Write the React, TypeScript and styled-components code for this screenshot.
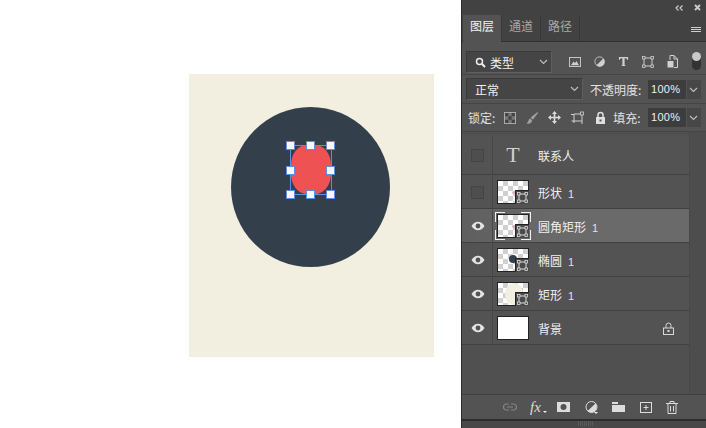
import React from "react";
import styled, { createGlobalStyle } from "styled-components";

const Global = createGlobalStyle`
  html, body { margin: 0; padding: 0; background: #fff; }
  body { font-family: "Noto Sans CJK SC", "Liberation Sans", sans-serif; }
`;
const Page = styled.div`
  width: 706px; height: 428px; display: flex; overflow: hidden; background: #fff;
`;
const Workspace = styled.div`
  flex: 1; padding: 74px 0 0 189px; box-sizing: border-box;
`;
const Doc = styled.div`
  position: relative; width: 245px; height: 283px; background: #f2eee0;
`;
const Circle = styled.div`
  position: absolute; left: 42px; top: 33px; width: 159px; height: 160px; border-radius: 50%; background: #333f4b;
`;
const Shape = styled.div`
  position: absolute; left: 102px; top: 71px; width: 40px; height: 49px; background: #ee5253;
  border-radius: 16px / 20px;
`;
const Outline = styled.div`
  position: absolute; left: 101px; top: 71px; width: 40px; height: 48px; border: 1px solid #5f8ee0;
`;
const Handle = styled.div<{ $x: number; $y: number }>`
  position: absolute; left: ${p => p.$x}px; top: ${p => p.$y}px; width: 7px; height: 7px;
  background: #f6f9ff; border: 1px solid #5f8ee0;
`;
const Panel = styled.div`
  width: 245px; height: 428px; flex: none; background: #535353; display: flex; flex-direction: column;
  box-sizing: border-box; border-left: 1px solid #2c2c2c; color: #e6e6e6;
`;
const TopBar = styled.div`
  height: 15px; background: #424242; display: flex; justify-content: flex-end; align-items: center;
  gap: 11px; padding-right: 5px; flex: none;
`;
const TabBar = styled.div`
  height: 27px; background: #424242; display: flex; align-items: stretch; flex: none; border-bottom: 1px solid #323232;
  box-sizing: border-box;
`;
const Tab = styled.div<{ $active?: boolean }>`
  width: 39px; margin-left: ${p => (p.$active ? 1 : 0)}px; font-size: 12px; line-height: 22px; text-align: center;
  background: ${p => (p.$active ? "#535353" : "#424242")};
  color: ${p => (p.$active ? "#f4f4f4" : "#a8a8a8")};
  border-right: 1px solid #383838; box-sizing: border-box;
  margin-bottom: ${p => (p.$active ? "-1px" : 0)};
`;
const TabMenu = styled.div`
  margin-left: auto; margin-right: 5px; align-self: center; width: 10px; display: flex; flex-direction: column; gap: 1px; padding-top: 2px;
  span { display: block; height: 1px; background: #cfcfcf; }
`;
const ToolRow = styled.div<{ $h: number; $top?: number }>`
  height: ${p => p.$h}px; display: flex; align-items: center; padding: ${p => p.$top ?? 0}px 5px 0 4px; box-sizing: border-box; flex: none;
  border-bottom: 1px solid #454545; position: relative;
`;
const Select = styled.div<{ $w: number }>`
  width: ${p => p.$w}px; height: 22px; box-sizing: border-box; flex: none; gap: 4px;
  background: #454545; border: 1px solid #3a3a3a; border-bottom-color: #5f5f5f; border-right-color: #5f5f5f;
  display: flex; align-items: center; font-size: 12px; color: #f0f0f0; padding: 1px 0 0 8px; position: relative;
`;
const Chevron = styled.svg`
  position: absolute; right: 3px; top: 7px; width: 9px; height: 6px;
`;
const FilterIcons = styled.div`
  display: flex; align-items: center; margin-left: 17px; gap: 13px;
  svg { display: block; flex: none; }
`;
const Toggle = styled.div`
  position: absolute; right: 5px; top: 10px; width: 9px; height: 18px; border-radius: 5px; background: #333;
  &::before { content: ""; display: block; width: 9px; height: 9px; border-radius: 50%; background: #c9c9c9; }
`;
const Label = styled.span<{ $m: number }>`
  font-size: 12px; color: #e2e2e2; white-space: nowrap; margin-left: ${p => p.$m}px;
`;
const Percent = styled.div`
  width: 38px; height: 19px; box-sizing: border-box; background: #3d3d3d; font-size: 11px; font-family: "Liberation Sans", sans-serif; letter-spacing: .3px;
  line-height: 19px; padding-left: 3px; color: #f0f0f0; flex: none; margin-left: auto;
`;
const Arrow = styled.div`
  width: 14px; height: 19px; background: #474747; margin-left: 1px; position: relative; flex: none;
`;
const LockIcons = styled.div`
  display: flex; align-items: center; margin-left: 9px; gap: 10px; width: 109px; flex: none;
  svg { display: block; flex: none; }
`;
const ListArea = styled.div`
  flex: 1; display: flex; min-height: 0;
`;
const List = styled.div`
  width: 227px; flex: none; padding-top: 3px; box-sizing: border-box; background: #505050;
`;
const Scroll = styled.div`
  flex: 1; background: #4d4d4d; border-left: 1px solid #484848;
`;
const Row = styled.div<{ $h?: number; $selected?: boolean }>`
  height: ${p => p.$h ?? 34}px; box-sizing: border-box; display: flex; align-items: center; position: relative; padding-top: 1px;
  background: ${p => (p.$selected ? "linear-gradient(90deg,#5f5f5f,#6a6a6a 40%)" : "#535353")};
  border-bottom: 1px solid #404040;
`;
const EyeCell = styled.div`
  width: 29px; flex: none; display: flex; align-items: center; justify-content: center; align-self: stretch;
  border-right: 1px solid #464646; margin-left: 1px;
`;
const Check = styled.div`
  width: 11px; height: 11px; border: 1px solid #444; background: #4e4e4e;
`;
const Thumb = styled.div<{ $blank?: boolean }>`
  width: 32px; height: 24px; margin-left: 4px; position: relative; flex: none; border: 1px solid #222; box-sizing: border-box;
  background-color: #fff;
  ${p => !p.$blank && `background-image: repeating-conic-gradient(#d0d0d0 0 25%, #fff 0 50%); background-size: 10px 10px;`}
`;
const Badge = styled.svg`
  position: absolute; right: -1px; bottom: -1px; width: 14px; height: 14px; display: block;
`;
const Bracket = styled.div`
  position: absolute; left: -3px; top: -3px; right: -3px; bottom: -3px;
  --c: #f0f0f0;
  background:
    linear-gradient(var(--c),var(--c)) 0 0/10px 1px no-repeat,
    linear-gradient(var(--c),var(--c)) 0 0/1px 10px no-repeat,
    linear-gradient(var(--c),var(--c)) 100% 0/10px 1px no-repeat,
    linear-gradient(var(--c),var(--c)) 100% 0/1px 10px no-repeat,
    linear-gradient(var(--c),var(--c)) 0 100%/10px 1px no-repeat,
    linear-gradient(var(--c),var(--c)) 0 100%/1px 10px no-repeat,
    linear-gradient(var(--c),var(--c)) 100% 100%/10px 1px no-repeat,
    linear-gradient(var(--c),var(--c)) 100% 100%/1px 10px no-repeat;
`;
const Spot = styled.div<{ $x: number; $y: number; $w: number; $h: number; $c: string }>`
  position: absolute; left: ${p => p.$x}px; top: ${p => p.$y}px; width: ${p => p.$w}px; height: ${p => p.$h}px;
  border-radius: 50%; background: ${p => p.$c};
`;
const Name = styled.span`
  font-size: 12px; color: #f0f0f0; margin-left: 9px; white-space: nowrap;
`;
const Num = styled.span`
  font-family: "Liberation Sans", sans-serif; font-size: 11px; margin-left: 6px; color: #e2e2e2;
`;
const TypeT = styled.div`
  width: 32px; margin-left: 4px; text-align: center; font-family: "Liberation Serif", serif; font-size: 22px; line-height: 1; color: #cfcfcf; flex: none;
`;
const LockTail = styled.svg`
  position: absolute; right: 15px; top: 11px; display: block;
`;
const Footer = styled.div`
  height: 25px; flex: none; background: #535353; border-top: 1px solid #3f3f3f; display: flex; align-items: center;
  justify-content: flex-end; padding-right: 28px; box-sizing: border-box;
`;
const FootIcon = styled.svg<{ $m: number }>`
  display: block; flex: none; margin-left: ${p => p.$m}px;
`;
const Fx = styled.span`
  font-family: "Liberation Serif", serif; font-style: italic; font-size: 15px; color: #dcdcdc; margin-left: 13px; line-height: 1; position: relative; width: 14px;
  &::after { content: ""; position: absolute; right: -3px; bottom: 0; border: 2px solid transparent; border-top-color: #eee; }
`;
const Grip = styled.div`
  height: 9px; flex: none; background: #484848; border-top: 2px solid #2d2d2d; box-sizing: border-box; display: flex; justify-content: center;
  &::after { content: ""; width: 16px; height: 5px; background: repeating-linear-gradient(90deg,#5a5a5a 0 1px,transparent 1px 2px); margin-right: -3px; }
`;

const ChevronIcon = () => (
  <Chevron viewBox="0 0 9 6"><path d="M1 1l3.500 3.500L8 1" fill="none" stroke="#bdbdbd" strokeWidth="1.200" /></Chevron>
);
const Eye = () => (
  <svg width="14" height="10" viewBox="0 0 14 10">
    <path d="M.5 5C2.500 2 4.500.7 7 .7S11.500 2 13.500 5C11.500 8 9.500 9.300 7 9.300S2.500 8 .5 5Z" fill="#e4e4e4" />
    <circle cx="7" cy="5" r="2.400" fill="#535353" />
  </svg>
);
const ShapeBadge = () => (
  <Badge viewBox="0 0 14 14">
    <rect width="14" height="14" fill="#4a4a4a" />
    <path d="M.5 14V.5H14" fill="none" stroke="#222" strokeWidth="1" />
    <rect x="4" y="4" width="7" height="7" fill="none" stroke="#ddd" />
    <rect x="2.500" y="2.500" width="2.500" height="2.500" fill="#4a4a4a" stroke="#ddd" strokeWidth=".8" />
    <rect x="10" y="2.500" width="2.500" height="2.500" fill="#4a4a4a" stroke="#ddd" strokeWidth=".8" />
    <rect x="2.500" y="10" width="2.500" height="2.500" fill="#4a4a4a" stroke="#ddd" strokeWidth=".8" />
    <rect x="10" y="10" width="2.500" height="2.500" fill="#4a4a4a" stroke="#ddd" strokeWidth=".8" />
  </Badge>
);
const handles = [[0,0],[20,0],[40,0],[0,25],[40,25],[0,49],[20,49],[40,49]];

export default function App() {
  return (
    <Page>
      <Global />
      <Workspace>
        <Doc>
          <Circle />
          <Shape />
          <Outline>
            {handles.map(([x, y]) => <Handle key={`${x}-${y}`} $x={x - 5} $y={y - 5} />)}
          </Outline>
        </Doc>
      </Workspace>
      <Panel>
        <TopBar>
          <svg width="8" height="6" viewBox="0 0 8 6"><path d="M3.500.5 1 3l2.500 2.500M7.500.5 5 3l2.500 2.500" fill="none" stroke="#ccc" strokeWidth="1.200" /></svg>
          <svg width="7" height="7" viewBox="0 0 7 7"><path d="M1 1l5 5M6 1 1 6" stroke="#ccc" strokeWidth="1.800" /></svg>
        </TopBar>
        <TabBar>
          <Tab $active>图层</Tab>
          <Tab>通道</Tab>
          <Tab>路径</Tab>
          <TabMenu><span /><span /><span /></TabMenu>
        </TabBar>
        <ToolRow $h={33} $top={7}>
          <Select $w={86}>
            <svg width="11" height="11" viewBox="0 0 11 11"><circle cx="4.500" cy="4.500" r="3" fill="none" stroke="#eee" strokeWidth="1.500" /><path d="M6.800 6.800 10 10" stroke="#eee" strokeWidth="2" /></svg>
            类型
            <ChevronIcon />
          </Select>
          <FilterIcons>
            <svg width="12" height="10" viewBox="0 0 13 11"><rect x=".5" y=".5" width="12" height="10" fill="none" stroke="#d0d0d0" /><path d="M2 9l3-4 1.500 2L8 4.500 11 9Z" fill="#d0d0d0" /></svg>
            <svg width="11" height="11" viewBox="0 0 13 13"><circle cx="6.500" cy="6.500" r="5.500" fill="#555" stroke="#d0d0d0" /><path d="M11 3A5.500 5.500 0 0 1 3 11Z" fill="#d0d0d0" /></svg>
            <svg width="11" height="11" viewBox="0 0 12 12"><path d="M1 1h10v3h-1L9 2.500H7.200V10L8.500 10.500V11h-5v-.5L4.800 10V2.500H3L2 4H1Z" fill="#d0d0d0" /></svg>
            <svg width="12" height="12" viewBox="0 0 12 12"><rect x="2" y="2" width="8" height="8" fill="none" stroke="#d0d0d0" /><g fill="#535353" stroke="#d0d0d0" strokeWidth=".8"><rect x=".5" y=".5" width="2.500" height="2.500" /><rect x="9" y=".5" width="2.500" height="2.500" /><rect x=".5" y="9" width="2.500" height="2.500" /><rect x="9" y="9" width="2.500" height="2.500" /></g></svg>
            <svg width="11" height="13" viewBox="0 0 11 13"><path d="M3 5V.5h4L10.500 4v8.500H7" fill="none" stroke="#d0d0d0" /><path d="M7 .5V4h3.500" fill="none" stroke="#d0d0d0" /><rect x=".5" y="6" width="6" height="6.500" fill="#d0d0d0" /></svg>
          </FilterIcons>
          <Toggle />
        </ToolRow>
        <ToolRow $h={29}>
          <Select $w={117}>正常<ChevronIcon /></Select>
          <Label $m={7}>不透明度:</Label>
          <Percent>100%</Percent>
          <Arrow><ChevronIcon /></Arrow>
        </ToolRow>
        <ToolRow $h={28}>
          <Label $m={2}>锁定:</Label>
          <LockIcons>
            <svg width="12" height="12" viewBox="0 0 11 11"><rect x=".5" y=".5" width="10" height="10" fill="#777" stroke="#aaa" /><path d="M1 1h3v3H1zM7 1h3v3H7zM4 4h3v3H4zM1 7h3v3H1zM7 7h3v3H7z" fill="#444" /></svg>
            <svg width="12" height="12" viewBox="0 0 13 13"><path d="M12.500 0 5 6 7.500 8.500 13 1ZM.5 12.500c3.500 .8 6-.5 6-3.500L4.500 7C2.500 7.500 3 11 .5 12.500Z" fill="#a0a0a0" /></svg>
            <svg width="13" height="13" viewBox="0 0 13 13"><path d="M6.500 0 9 3H7.300v2.700H10V4l3 2.500L10 9V7.300H7.300V10H9l-2.500 3L4 10h1.700V7.300H3V9L0 6.500 3 4v1.700h2.700V3H4Z" fill="#dcdcdc" /></svg>
            <svg width="14" height="13" viewBox="0 0 14 13"><path d="M3 3h8v7H3ZM0 3.500h3M11 10v3M3 10v2M3 10H.5" fill="none" stroke="#d0d0d0" /><rect x="9.500" y="1" width="3" height="3" fill="#535353" stroke="#d0d0d0" strokeWidth=".8" /></svg>
            <svg width="11" height="13" viewBox="0 0 11 13"><path d="M3 6V4a2.500 2.500 0 0 1 5 0v2" fill="none" stroke="#e0e0e0" strokeWidth="1.500" /><path d="M1 6h9v7H1ZM4.500 8.500v2h2v-2Z" fill="#e0e0e0" fillRule="evenodd" /></svg>
          </LockIcons>
          <Label $m={0}>填充:</Label>
          <Percent>100%</Percent>
          <Arrow><ChevronIcon /></Arrow>
        </ToolRow>
        <ListArea>
          <List>
            <Row $h={40}><EyeCell><Check /></EyeCell><TypeT>T</TypeT><Name>联系人</Name></Row>
            <Row><EyeCell><Check /></EyeCell><Thumb><Spot $x={14} $y={10} $w={4} $h={3} $c="#dcb0b8" /><ShapeBadge /></Thumb><Name>形状<Num>1</Num></Name></Row>
            <Row $selected><EyeCell><Eye /></EyeCell><Thumb><Spot $x={14} $y={10} $w={4} $h={3} $c="#dcb0b8" /><ShapeBadge /><Bracket /></Thumb><Name>圆角矩形<Num>1</Num></Name></Row>
            <Row><EyeCell><Eye /></EyeCell><Thumb><Spot $x={11} $y={6} $w={8} $h={8} $c="#333f4b" /><ShapeBadge /></Thumb><Name>椭圆<Num>1</Num></Name></Row>
            <Row><EyeCell><Eye /></EyeCell><Thumb><Spot $x={7} $y={0} $w={18} $h={22} $c="#f2eee0" /><ShapeBadge /></Thumb><Name>矩形<Num>1</Num></Name></Row>
            <Row><EyeCell><Eye /></EyeCell><Thumb $blank /><Name>背景</Name>
              <LockTail width="11" height="13" viewBox="0 0 11 13"><path d="M3 6V3.500a2.500 2.500 0 0 1 5 0V6" fill="none" stroke="#d8d8d8" /><rect x=".5" y="6" width="10" height="6.500" fill="none" stroke="#d8d8d8" /><rect x="4.500" y="8" width="2" height="2" fill="#d8d8d8" /></LockTail>
            </Row>
          </List>
          <Scroll />
        </ListArea>
        <Footer>
          <FootIcon $m={0} width="14" height="8" viewBox="0 0 14 8"><path d="M6 1H3.500a3 3 0 0 0 0 6H6M8 1h2.500a3 3 0 0 1 0 6H8M4 4h6" fill="none" stroke="#858585" strokeWidth="1.200" /></FootIcon>
          <Fx>fx</Fx>
          <FootIcon $m={13} width="13" height="10" viewBox="0 0 13 10"><path d="M0 0h13v10H0ZM6.500 2a3 3 0 1 0 0 6 3 3 0 0 0 0-6Z" fill="#dcdcdc" fillRule="evenodd" /></FootIcon>
          <FootIcon $m={15} width="13" height="13" viewBox="0 0 13 13"><circle cx="6.500" cy="6" r="5.500" fill="#535353" stroke="#dcdcdc" /><path d="M10.500 2.500A5.500 5.500 0 0 1 2.500 10Z" fill="#dcdcdc" /><path d="M9 11h4l-2 2Z" fill="#eee" /></FootIcon>
          <FootIcon $m={14} width="13" height="10" viewBox="0 0 13 10"><path d="M0 0h6v2H0ZM0 3h13v7H0Z" fill="#dcdcdc" /></FootIcon>
          <FootIcon $m={15} width="12" height="11" viewBox="0 0 12 11"><rect x=".5" y=".5" width="11" height="10" fill="none" stroke="#dcdcdc" /><path d="M6 3v5M3.500 5.500h5" stroke="#dcdcdc" /></FootIcon>
          <FootIcon $m={14} width="12" height="13" viewBox="0 0 12 13"><path d="M0 2.500h12M4 2.500V.5h4v2M2 2.500V12.500h8v-10M4.500 5v5.500M7.500 5v5.500" fill="none" stroke="#dcdcdc" /></FootIcon>
        </Footer>
        <Grip />
      </Panel>
    </Page>
  );
}
